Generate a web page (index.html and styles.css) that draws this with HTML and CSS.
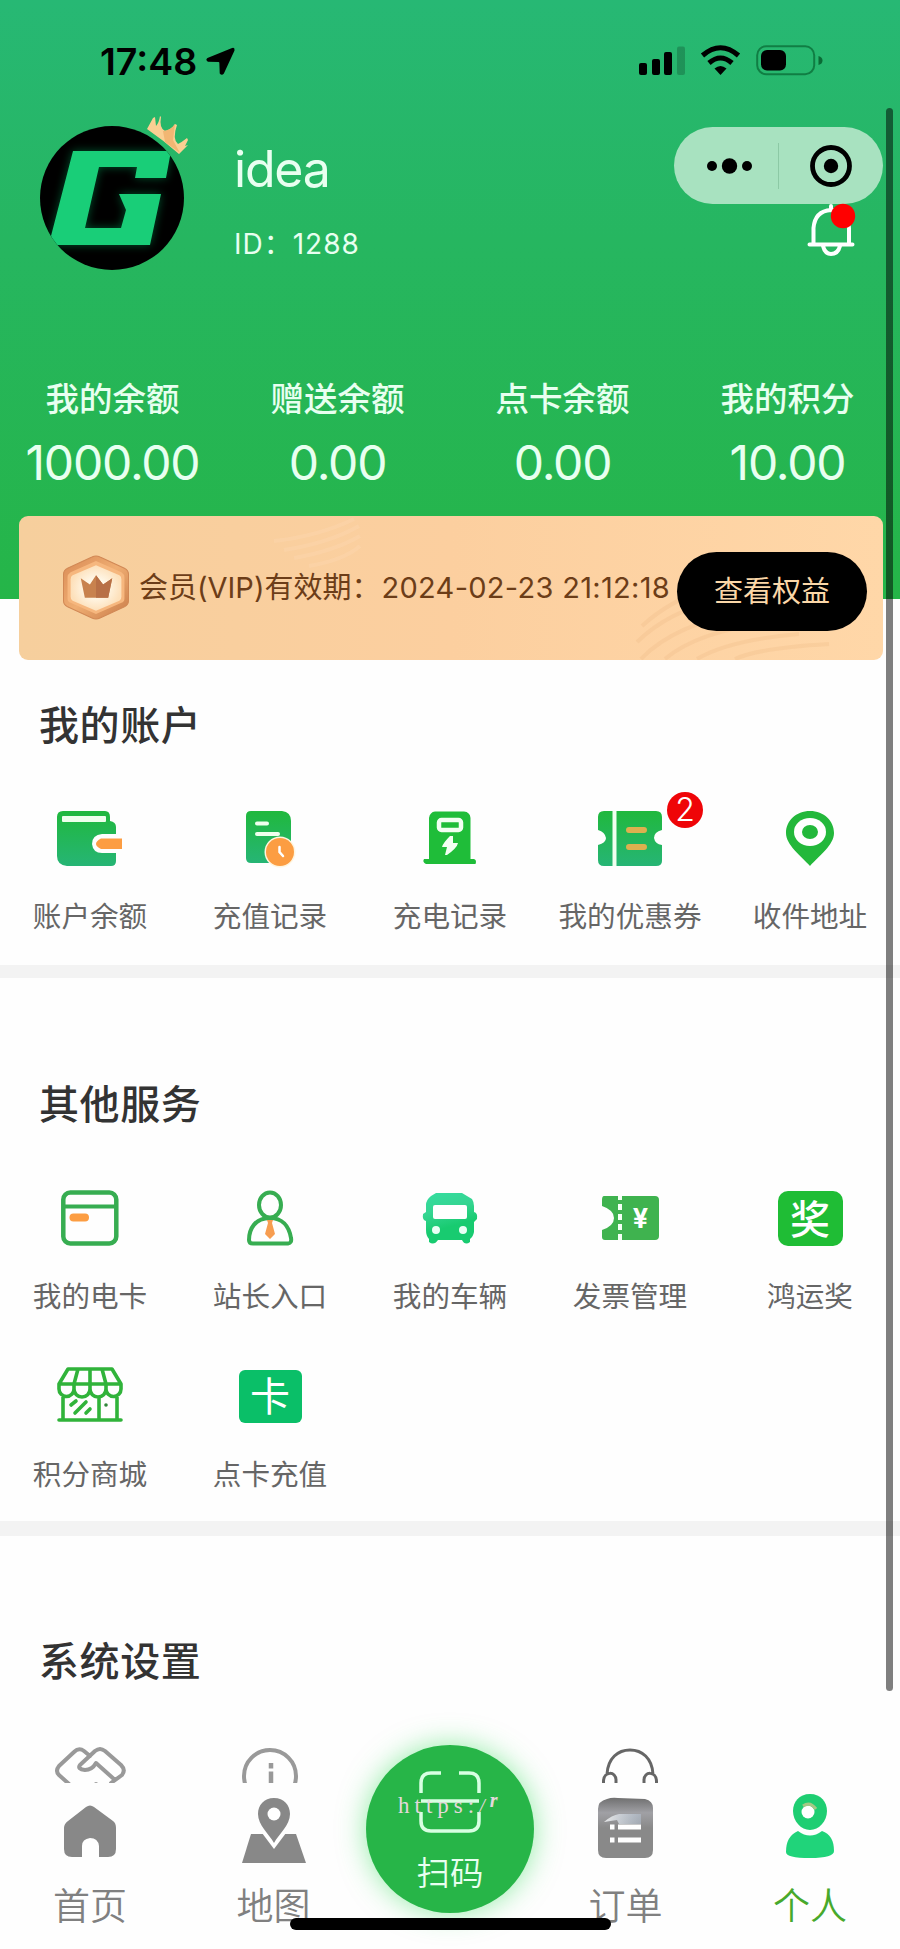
FILE: index.html
```html
<!DOCTYPE html>
<html lang="zh-CN">
<head>
<meta charset="utf-8">
<title>个人</title>
<link rel="stylesheet" href="styles.css">
</head>
<body>
<div class="phone">
  <header class="hero">
    <div class="status">
      <div class="status-left">
        <span class="time">17:48</span>
        <svg class="arrow" viewBox="0 0 30 30"><path d="M27 1Q30 0 29.500 3.500L18.500 27.500Q16.500 30 14.200 27.500L13.800 16.500Q13.800 15.700 13 15.600L2 15.200Q-1 13.500 1.500 11.500Z"/></svg>
      </div>
      <svg class="status-icons" viewBox="0 0 184 32">
        <rect x="0" y="18" width="8" height="12" rx="2"/><rect x="13" y="14" width="8" height="16" rx="2"/><rect x="25" y="7" width="8" height="23" rx="2"/><rect x="38" y="1.500" width="8" height="28.500" rx="2" fill-opacity=".2"/>
        <g fill="none" stroke="#000" stroke-width="5"><path d="M63.500 10.500Q81.500-5 99.500 10.500"/><path d="M70 18Q81.500 8 93 18"/></g><path d="M75.500 23.500Q81.500 18.500 87.500 23.500L81.500 30Z"/>
        <rect x="118.200" y="1.200" width="57" height="28" rx="9" fill="none" stroke="#0a6b35" stroke-opacity=".75" stroke-width="2"/><rect x="122" y="5" width="25" height="20.500" rx="6"/><path d="M179.500 11q4 1 4 4.500t-4 4.500z" fill="#0a6b35"/>
      </svg>
    </div>
    <div class="profile">
      <div class="avatar">
        <svg class="logo" viewBox="0 0 144 144">
          <defs><clipPath id="round"><circle cx="72" cy="72" r="72"/></clipPath><filter id="glow" x="-30%" y="-30%" width="160%" height="160%"><feGaussianBlur stdDeviation="5"/></filter></defs>
          <circle cx="72" cy="72" r="72" fill="#000"/>
          <g clip-path="url(#round)">
            <path d="M33 25H130L126 52H95L97 41H59L45 102H81L86 84L79 68H121L110 119H13L12 108Z" fill="#0d8a4c" opacity=".6" filter="url(#glow)"/>
            <path d="M33 25H131L126 52H95L97 41H59L45 102H81L86 84L79 68H121L110 119H13L11 110Z" fill="#19ce78"/>
          </g>
        </svg>
        <svg class="crown" viewBox="0 0 42 40"><path d="M0 13L6 2L8 1L9 10Q12 7 13 0L14 1Q12 12 18 15Q24 14 28 8L30 9Q25 23 31 28Q35 26 40 22L41 24L38 30L41 29L32 38Q16 24 0 13Z" fill="#fbcf93"/><path d="M16 15Q24 14 28 8L26 24L33 37L18 26Z" fill="#f2b673"/></svg>
      </div>
      <div class="who">
        <div class="name">idea</div>
        <div class="uid">ID：<span>1288</span></div>
      </div>
      <div class="tools">
        <div class="capsule">
          <svg class="dots" viewBox="0 0 46 16"><circle cx="5" cy="8" r="5"/><circle cx="22.500" cy="8" r="7.700"/><circle cx="40" cy="8" r="5"/></svg>
          <i class="capsule-line"></i>
          <svg class="target" viewBox="0 0 42 42"><circle cx="21" cy="21" r="18.500" fill="none" stroke="#000" stroke-width="4.800"/><circle cx="21" cy="21" r="7.200"/></svg>
        </div>
        <svg class="bell" viewBox="0 0 50 52"><g fill="none" stroke="#fff" stroke-width="4" stroke-linecap="round"><path d="M2.500 40.500H45.500M6.500 39V24Q8 7 24 6Q41 7 42 24V39M24 5V2M16 42Q18 50 24 50Q31 50 33 42"/></g><circle cx="36" cy="12" r="12.200" fill="#f00"/></svg>
      </div>
    </div>
    <div class="stats">
      <div class="stat"><b>我的余额</b><span>1000.00</span></div>
      <div class="stat"><b>赠送余额</b><span>0.00</span></div>
      <div class="stat"><b>点卡余额</b><span>0.00</span></div>
      <div class="stat"><b>我的积分</b><span>10.00</span></div>
    </div>
  </header>

  <section class="vip">
    <svg class="waves" viewBox="0 0 864 144"><g fill="none" stroke="#e8b17c" stroke-opacity=".22" stroke-width="4"><path d="M255 25Q300 20 335 3M265 34Q310 27 340 10M275 42Q315 35 341 20M290 50Q325 44 341 30" stroke="#ffdfbd"/><path d="M623 110Q650 85 690 72M618 126Q650 95 700 84M622 143Q655 108 730 95M646 143Q680 115 750 107M678 143Q710 124 780 118M716 143Q740 132 810 128"/></g></svg>
    <svg class="medal" viewBox="0 0 68 64"><defs><linearGradient id="rim" x2="1" y2="1"><stop stop-color="#d98b55"/><stop offset=".5" stop-color="#efad72"/><stop offset="1" stop-color="#c97c49"/></linearGradient><radialGradient id="face"><stop offset=".4" stop-color="#fff7e7"/><stop offset="1" stop-color="#fde0ba"/></radialGradient></defs><path d="M30 2Q34 0 38 2L62 13Q66 15 66 19V45Q66 49 62 51L38 62Q34 64 30 62L6 51Q2 49 2 45V19Q2 15 6 13Z" fill="url(#rim)" stroke="#d18855"/><path d="M34 6L59 17Q62 19 62 22V43Q62 46 59 47L34 58L9 47Q6 46 6 43V22Q6 19 9 17Z" fill="#f6b77e"/><path d="M34 10L57 20Q59 21 59 24V41Q59 44 57 45L34 55L11 45Q9 44 9 41V24Q9 21 11 20Z" fill="url(#face)"/><path d="M19 23L28 29L34 20L41 29L50 23L46 42H23Z" fill="#c8824e"/><path d="M34 20L41 29L50 23L46 42H34Z" fill="#b87046"/></svg>
    <div class="vip-text">会员(VIP)有效期：<span>2024-02-23 21:12:18</span></div>
    <div class="vip-btn">查看权益</div>
  </section>

  <main>
    <section class="block account">
      <h2>我的账户</h2>
      <div class="grid">
        <div class="item"><svg viewBox="0 0 68 60"><defs><linearGradient id="g" x2="0" y2="1"><stop stop-color="#20b83d"/><stop offset="1" stop-color="#26b575"/></linearGradient></defs><path d="M7 3H49Q54 3 54 9V13Q60 14 60 19V53Q60 58 55 58H11Q1 57 1 48V9Q1 3 7 3Z" fill="url(#g)"/><rect x="6" y="8" width="44" height="6" rx="1" fill="#efffed"/><path d="M68 26H46Q36 27 36 36Q37 45 46 45H68Z" fill="#fefefe"/><path d="M66 30.500H45Q35 36 45 41H66Z" fill="#fc9d42"/></svg><span>账户余额</span></div>
        <div class="item"><svg viewBox="0 0 68 60"><path d="M15 3H46Q55 4 55 13V55H15Q10 55 10 50V8Q10 3 15 3Z" fill="url(#g)"/><path d="M21 15.500H31M21 26H42" stroke="#efffed" stroke-width="4" stroke-linecap="round"/><circle cx="44" cy="44" r="15.500" fill="#fff5df"/><circle cx="44" cy="44" r="14" fill="#fc9d42"/><path d="M43.500 39V44L47 48" fill="none" stroke="#fff" stroke-width="2.500" stroke-linecap="round"/></svg><span>充值记录</span></div>
        <div class="item"><svg viewBox="0 0 68 60"><path d="M19 3.500H48Q54 4 54.500 10V51H58Q61 52 59.500 56H10Q6 54 8 51H13V10Q14 4 19 3.500Z" fill="#1fbd39"/><rect x="23" y="12" width="22" height="10" rx="2.500" fill="none" stroke="#f2fff2" stroke-width="4.500"/><path d="M34 28H37V35H42Q41 40 31 47H29L31 39H26Q27 35 34 28Z" fill="#f2fff2"/></svg><span>充电记录</span></div>
        <div class="item"><svg viewBox="0 0 68 60"><path d="M8 3H60Q66 3 66 9V22Q58 24 58 30Q59 36 66 37V53Q66 58 60 58H8Q2 58 2 52V37Q10 35 10 30Q9 24 2 22V9Q2 3 8 3Z" fill="url(#g)"/><path d="M18.500 3V58" stroke="#f1fff0" stroke-width="4"/><path d="M33 22H48M33 39H48" stroke="#ddb04f" stroke-width="6" stroke-linecap="round"/></svg><i class="badge">2</i><span>我的优惠券</span></div>
        <div class="item"><svg viewBox="0 0 68 60"><path d="M34 3C20 3 10 13 10 25C10 37 25 48 34 58C43 48 58 37 58 25C58 13 48 3 34 3Z" fill="#23b83b"/><ellipse cx="34" cy="24" rx="16" ry="14" fill="#fff"/><ellipse cx="34" cy="24" rx="8" ry="7" fill="#23b83b"/></svg><span>收件地址</span></div>
      </div>
    </section>

    <section class="block services">
      <h2>其他服务</h2>
      <div class="grid">
        <div class="item"><svg viewBox="0 0 68 60"><rect x="7.300" y="4.500" width="53" height="51" rx="7" fill="none" stroke="#37ad51" stroke-width="4.500"/><path d="M7 18.500H60" stroke="#37ad51" stroke-width="4"/><path d="M17.500 29.500H29" stroke="#fc9d42" stroke-width="8" stroke-linecap="round"/></svg><span>我的电卡</span></div>
        <div class="item"><svg viewBox="0 0 68 60"><g fill="none" stroke="#37ad51" stroke-width="4"><ellipse cx="34" cy="17" rx="11" ry="12.500"/><path d="M34 30C19 30 13 41 13 52Q13 55.500 17 55.500H52Q56 55 55 50C53 38 46 30 34 30Z"/></g><path d="M31 32H37L36 35L39 46L34 51L29 46L32 35Z" fill="#f79d50"/></svg><span>站长入口</span></div>
        <div class="item"><svg viewBox="0 0 68 60"><defs><linearGradient id="bus" x1="0" y1="0" x2=".3" y2="1"><stop stop-color="#35dda0"/><stop offset=".4" stop-color="#35d592"/><stop offset=".75" stop-color="#18cb70"/></linearGradient></defs><path d="M20 5H46L56 11Q58 14 58 18V24Q62 25 61 31L58 34V44Q57 49 54 51V54Q49 58 46 52H22Q18 58 13 54V51Q10 48 10 42V33Q6 32 7 26L10 24V17Q10 12 15 8Z" fill="url(#bus)"/><rect x="17" y="17" width="34" height="14" rx="2" fill="#fff"/><circle cx="20" cy="42" r="4" fill="#eafff5"/><circle cx="47" cy="42" r="4" fill="#eafff5"/></svg><span>我的车辆</span></div>
        <div class="item"><svg viewBox="0 0 68 60"><path d="M8 8H59Q63 8 63 12V48Q63 52 59 52H9Q6 52 6 49V42Q18 38 18 30Q18 22 6 18V12Q6 8 8 8Z" fill="#3fb34f"/><path d="M24 8V52" stroke="#f4fff4" stroke-width="4" stroke-dasharray="4 4 6 4 6 4 6 4 6"/><text x="44.500" y="40" class="yen">¥</text></svg><span>发票管理</span></div>
        <div class="item"><div class="tile prize">奖</div><span>鸿运奖</span></div>
        <div class="item"><svg viewBox="0 0 68 60"><g fill="none" stroke="#30b33a" stroke-width="3.600" stroke-linejoin="round" stroke-linecap="round"><path d="M12 3H56L65 18V23A7.500 7.500 0 0 1 50 23A7.500 7.500 0 0 1 34 23A7.500 7.500 0 0 1 18 23A7.500 7.500 0 0 1 3 23V18ZM3 18H65M22 3L18 18V23M34 3V23M46 3L50 18V23M7 31V54M61 31V54M43 31V54M3 54H65M15 39L20 35M19 47L30 36M30 47L34 43"/></g><circle cx="50" cy="39" r="1.800" fill="#30863a"/></svg><span>积分商城</span></div>
        <div class="item"><div class="tile card">卡</div><span>点卡充值</span></div>
      </div>
    </section>

    <section class="block settings">
      <h2>系统设置</h2>
      <div class="grid peek">
        <div class="item"><svg viewBox="0 0 74 60"><g fill="none" stroke="#999" stroke-width="4" stroke-linejoin="round" stroke-linecap="round"><path d="M16 38L6 29Q2 25 6 20L21 6Q26 1 31 5L37 10M58 37L69 29Q73 24 68 19L52 5Q47 1 42 5L27 19Q24 23 32 24Q39 24 43 17L62 34M43 38L46 41"/></g></svg></div>
        <div class="item"><svg viewBox="0 0 74 60"><circle cx="37" cy="30" r="26" fill="none" stroke="#999" stroke-width="4"/><path d="M38 17V22.500M38 25.500V47" stroke="#999" stroke-width="4.500"/></svg></div>
        <div class="item"></div>
        <div class="item"><svg viewBox="0 0 74 60"><g fill="none" stroke="#666" stroke-width="3"><path d="M14 28C15 12 25 4 37 4S59 12 60 28M10.500 38V35C11 25 23 25 23 34V38M51 38V34C51 25 63 25 63.500 35V38"/></g></svg></div>
        <div class="item"></div>
      </div>
    </section>
  </main>

  <nav class="tabbar">
    <div class="tab"><svg viewBox="0 0 68 72"><path d="M30 11Q34 8 38 11L57 25Q60 27 60 32V53Q60 61 52 61H43V50Q42 42 34 42Q26 43 26 50V61H16Q8 61 8 53V32Q8 28 12 25Z" fill="#888"/></svg><span>首页</span></div>
    <div class="tab map"><svg viewBox="0 0 68 72"><path d="M11 38H56L66 67H2Z" fill="#888"/><path d="M34 53L22 37H46Z" fill="#fff"/><path d="M34 2C24 2 18 9 18 18C18 29 29 38 34 47C39 38 50 29 50 18C50 9 44 2 34 2Z" fill="#888"/><circle cx="34" cy="18" r="6.500" fill="#fff"/></svg><span>地图</span></div>
    <div class="tab scan-slot">
      <div class="scan">
        <svg viewBox="0 0 62 64"><g fill="none" stroke="#d8ffe2" stroke-width="3.500"><path d="M2 22V12Q2 2 12 2H22M40 2H50Q60 2 60 12V22M60 41V50Q60 60 50 60H12Q2 60 2 50V41M2 30H60"/></g></svg>
        <span>扫码</span>
        <em>https:<small>/</small><small class="raised">r</small></em>
      </div>
    </div>
    <div class="tab order"><svg viewBox="0 0 68 72"><defs><linearGradient id="ord" x2="0" y2="1"><stop stop-color="#6f6f6f"/><stop offset=".25" stop-color="#a0a0a5"/><stop offset=".5" stop-color="#898989"/></linearGradient><linearGradient id="shine"><stop stop-color="#fff" stop-opacity=".8"/><stop offset="1" stop-color="#bfd0e4" stop-opacity=".4"/></linearGradient></defs><path d="M15 3Q20 1 26 2L53 3Q61 5 61 12V54Q61 62 53 62H14Q6 62 6 54V13Q6 5 15 3Z" fill="url(#ord)"/><path d="M18 31H22.500M26 31H49M18 44H22.500M26 44H49" stroke="#fff" stroke-width="5"/><path d="M12 26Q20 19 27 18H49V28H27L25 24Z" fill="url(#shine)"/></svg><span>订单</span></div>
    <div class="tab me"><svg viewBox="0 0 68 72"><path d="M34 -2C23 -2 17 6 17 15C17 25 25 34 34 34C43 34 51 25 51 15C51 6 45 -2 34 -2Z" fill="#1ece72"/><path d="M22 35Q34 44 46 35Q58 39 58 55Q58 62 34 62Q10 62 10 56Q10 40 22 35Z" fill="#20d47a"/><circle cx="32" cy="16" r="6.500" fill="#fff"/><path d="M27 10Q34 5 40 13" stroke="#a5c885" stroke-width="3" fill="none"/></svg><span>个人</span></div>
  </nav>
  <div class="home-line"></div>
  <div class="scrollbar"></div>
</div>
</body>
</html>
```

FILE: styles.css
```css
* { box-sizing: border-box; }
body { margin: 0; background: #fff; font-family: Inter, "Noto Sans CJK SC", sans-serif; }
svg { display: block; overflow: visible; }
.phone { position: relative; width: 900px; height: 1949px; overflow: hidden; display: flex; flex-direction: column; background: #fefefe; }

.hero { height: 599px; flex: none; background: linear-gradient(#27b874, #26b660 40%, #25b548); color: #e8fff0; }
.status { height: 116px; padding: 45px 77px 0 100px; display: flex; justify-content: space-between; align-items: flex-start; }
.status-left { display: flex; gap: 9px; }
.time { font-size: 37.5px; line-height: 34px; font-weight: 600; color: #000; width: 97px; white-space: nowrap; }
.arrow { width: 29px; height: 29px; margin-top: 2px; }
.status-icons { width: 184px; height: 32px; }

.profile { height: 250px; padding-left: 40px; display: flex; }
.avatar { position: relative; width: 144px; height: 144px; margin-top: 10px; }
.crown { position: absolute; width: 42px; height: 40px; left: 107px; top: -10px; }
.who { flex: 1; padding: 23px 0 0 50px; }
.name { font-size: 50px; line-height: 60px; letter-spacing: -1.2px; }
.uid { font-size: 28px; line-height: 40px; margin-top: 25px; letter-spacing: 1px; display: flex; }
.tools { width: 226px; padding-top: 11px; }
.capsule { width: 209px; height: 77px; border-radius: 39px; background: #a8e2c0; display: flex; align-items: center; padding-left: 33px; }
.dots { width: 46px; height: 16px; }
.capsule-line { width: 1px; height: 46px; background: #8cc9a5; margin: 0 31px 0 25px; }
.target { width: 42px; height: 42px; }
.bell { width: 50px; height: 52px; margin-left: 133px; }

.stats { display: grid; grid-template-columns: repeat(4, 225px); padding-top: 9px; }
.stat { display: flex; flex-direction: column; align-items: center; }
.stat b { font-weight: 500; font-size: 33.5px; line-height: 48px; }
.stat span { font-size: 48px; line-height: 60px; margin-top: 10px; letter-spacing: -1.2px; font-weight: 370; }

.vip { position: relative; flex: none; margin: -83px 17px 0 19px; height: 144px; border-radius: 9px; overflow: hidden; background: linear-gradient(90deg, #f6cf9d, #fccf9f 50%, #ffd7a8); display: flex; align-items: center; padding-left: 42px; }
.waves { position: absolute; inset: 0; width: 864px; height: 144px; }
.medal { position: relative; width: 70px; height: 65px; margin-top: -2px; }
.vip-text { position: relative; width: 546px; padding-left: 8px; font-size: 29px; line-height: 40px; color: #6c3d18; white-space: nowrap; }
.vip-text span { letter-spacing: .3px; margin-left: 1px; }
.vip-btn { position: relative; width: 190px; height: 79px; margin-top: 6px; border-radius: 40px; background: #000; color: #fbd7a8; font-size: 29px; line-height: 80px; text-align: center; }

.block { width: 900px; }
.block h2 { margin: 0; padding-left: 39px; font-size: 40px; line-height: 61px; height: 60px; letter-spacing: .6px; font-weight: 500; color: #333; }
.grid { display: grid; grid-template-columns: repeat(5, 180px); row-gap: 34px; }
.item { position: relative; display: flex; flex-direction: column; align-items: center; height: 144px; }
.item svg { width: 68px; height: 60px; }
.item span { margin-top: 27px; font-size: 28.600px; line-height: 43px; color: #666; white-space: nowrap; }
.account { height: 305px; padding-top: 35px; }
.account .grid { margin-top: 53px; }
.services .grid { margin-top: 54px; }
.services { height: 556px; border-top: 13px solid #f3f3f3; padding-top: 96px; }
.settings { height: 264px; overflow: hidden; border-top: 15px solid #f3f3f3; padding-top: 95px; }
.badge { position: absolute; left: 127px; top: -16px; width: 36px; height: 36px; border-radius: 50%; background: #ef0508; color: #fff; font: 350 32px/36px Inter, sans-serif; text-align: center; }
.yen { font: 700 27px Inter, sans-serif; fill: #fff; text-anchor: middle; }
.tile { color: #fff; text-align: center; font-size: 40px; }
.prize { width: 65px; height: 55px; margin: 3px 0 2px; border-radius: 10px; background: #1fbd35; line-height: 57px; font-weight: 500; }
.card { width: 63px; height: 53px; margin: 4px 0 3px; border-radius: 6px; background: #0abf68; line-height: 54px; }
.peek { margin-top: 55px; }
.peek .item { height: 39px; }
.peek .item svg { width: 74px; height: 60px; }

.tabbar { flex: none; position: absolute; left: 0; right: 0; top: 1783px; height: 166px; display: grid; grid-template-columns: repeat(5, 180px); background: #fefefe; }
.tab { display: flex; flex-direction: column; align-items: center; padding-top: 13px; color: #808080; }
.tab svg { width: 68px; height: 72px; }
.tab span { font-size: 37px; line-height: 50px; margin-top: 14px; font-weight: 350; }
.map { padding-left: 7px; }
.order { padding-right: 9px; }
.me { color: #48a92c; }
.tab.scan-slot { padding: 0; }
.scan { position: relative; width: 168px; height: 168px; flex: none; margin-top: -38px; padding-top: 26px; border-radius: 50%; background: #27b548; box-shadow: 0 0 28px rgba(39, 220, 80, .5); color: #e8fff0; display: flex; flex-direction: column; align-items: center; }
.scan svg { width: 62px; height: 64px; }
.scan span { font-size: 33.500px; line-height: 44px; margin-top: 16px; font-weight: 350; }
.scan em { position: absolute; left: 32px; top: 45px; font: 23px/32px "Liberation Serif", serif; letter-spacing: 5px; color: #e5d8dc; white-space: nowrap; }
.scan small { font-size: 20px; font-style: italic; }
.scan .raised { position: relative; top: -6px; font-weight: 700; }
.home-line { position: absolute; left: 290px; top: 1918px; width: 321px; height: 12px; border-radius: 6px; background: #000; }
.scrollbar { position: absolute; left: 886px; top: 108px; width: 7px; height: 1583px; border-radius: 4px; background: rgba(0, 0, 0, .5); }
```
